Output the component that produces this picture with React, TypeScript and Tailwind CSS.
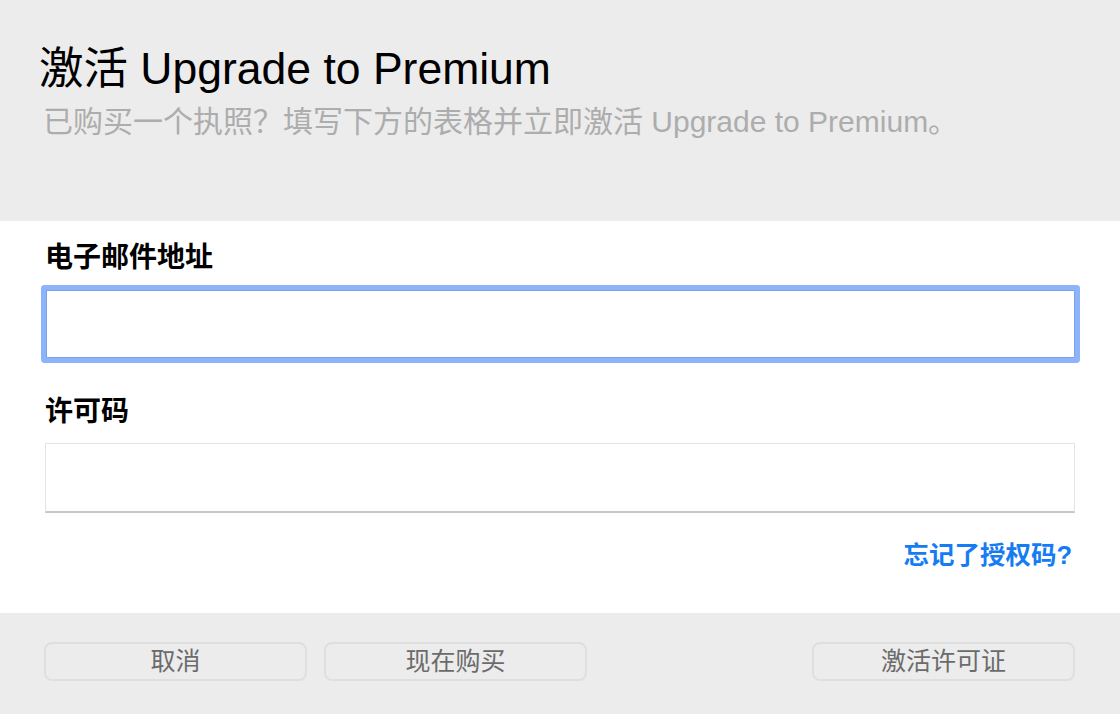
import { useState } from 'react';

const font = "font-['Liberation_Sans','Noto_Sans_CJK_SC',sans-serif]";

const FooterButton = ({ label }: { label: string }) => (
  <button
    type="button"
    className="w-[263px] h-[39px] rounded-[8px] border-2 border-[#dfdfdf] bg-[#ececec] text-[25px] leading-none text-[#6b6b6b]"
  >
    {label}
  </button>
);

export default function App() {
  const [email, setEmail] = useState('');
  const [code, setCode] = useState('');

  return (
    <div className={`w-[1120px] h-[714px] flex flex-col bg-white ${font}`}>
      <header className="h-[221px] bg-[#ececec] pl-[39px] pt-[47px]">
        <h1 className="text-[44.5px] leading-[44px] text-black">激活 Upgrade to Premium</h1>
        <p className="mt-[16px] pl-[4px] text-[30px] leading-[30px] text-[#adadad]">
          已购买一个执照？填写下方的表格并立即激活 Upgrade to Premium。
        </p>
      </header>

      <main className="flex-1 flex flex-col pl-[45px] pr-[45px] pt-[23px]">
        <label htmlFor="email" className="text-[28px] leading-[28px] font-bold text-black">
          电子邮件地址
        </label>
        <input
          id="email"
          type="email"
          value={email}
          onChange={(e) => setEmail(e.target.value)}
          className="mt-[18px] ml-[1px] h-[68px] rounded-[1px] border border-[#7d9fe8] bg-white px-3 text-[24px] outline-none ring-[5px] ring-[#8db4fa]"
        />

        <label htmlFor="code" className="mt-[40px] text-[28px] leading-[28px] font-bold text-black">
          许可码
        </label>
        <input
          id="code"
          type="text"
          value={code}
          onChange={(e) => setCode(e.target.value)}
          className="mt-[17px] h-[70px] border border-[#e4e4e4] border-b-2 border-b-[#c6c6c6] bg-white px-3 text-[24px] outline-none"
        />

        <div className="mt-[29px] flex justify-end pr-[3px]">
          <a href="#" className="text-[25.5px] leading-[27px] font-bold text-[#167cf3]">
            忘记了授权码?
          </a>
        </div>
      </main>

      <footer className="h-[101px] bg-[#ececec] flex pl-[44px] pr-[45px] pt-[29px]">
        <div className="flex gap-[17px]">
          <FooterButton label="取消" />
          <FooterButton label="现在购买" />
        </div>
        <div className="ml-auto">
          <FooterButton label="激活许可证" />
        </div>
      </footer>
    </div>
  );
}
